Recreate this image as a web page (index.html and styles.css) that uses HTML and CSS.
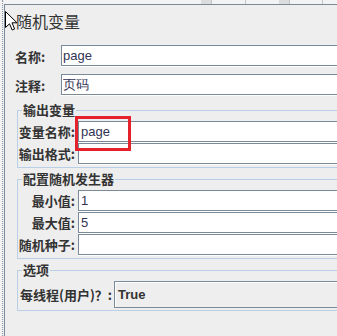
FILE: index.html
```html
<!DOCTYPE html>
<html>
<head>
<meta charset="utf-8">
<link rel="stylesheet" href="styles.css">
</head>
<body>
<div class="frame">
  <div class="gutter"></div>
  <div class="col">
    <div class="topstrip">
      <span class="sp s1"></span><span class="tabbox"></span><span class="tline"></span>
      <span class="sp s2"></span><span class="tline"></span>
      <span class="sp s3"></span><span class="tabbox"></span><span class="tline"></span>
      <span class="sp s4"></span><span class="tline"></span>
    </div>
    <div class="panel">
      <div class="title">随机变量</div>
      <div class="toprow">
        <span class="tlabel">名称:</span>
        <input class="field" type="text" value="page">
      </div>
      <div class="toprow second">
        <span class="tlabel">注释:</span>
        <input class="field" type="text" value="页码">
      </div>

      <fieldset class="group first">
        <legend>输出变量</legend>
        <div class="grid">
          <span class="glabel">变量名称:</span>
          <input class="field" type="text" value="page">
          <span class="glabel">输出格式:</span>
          <input class="field" type="text" value="">
        </div>
      </fieldset>

      <fieldset class="group">
        <legend>配置随机发生器</legend>
        <div class="grid">
          <span class="glabel">最小值:</span>
          <input class="field" type="text" value="1">
          <span class="glabel">最大值:</span>
          <input class="field" type="text" value="5">
          <span class="glabel">随机种子:</span>
          <input class="field" type="text" value="">
        </div>
      </fieldset>

      <fieldset class="group">
        <legend>选项</legend>
        <div class="optrow">
          <span class="olabel">每线程(用户)？:</span>
          <div class="combo">True</div>
        </div>
      </fieldset>
    </div>
  </div>
</div>
<div class="highlight"></div>
<svg class="cursor" width="13" height="21" viewBox="0 0 13 21">
  <path d="M0.5 0.5 L0.5 16.5 L4.5 12.8 L7.2 19 L9.6 18 L7 11.8 L12 11.8 Z" fill="#fff" stroke="#000" stroke-width="1" stroke-linejoin="miter"/>
</svg>
</body>
</html>
```
FILE: styles.css
```css
html, body {
  margin: 0;
  padding: 0;
}
body {
  width: 337px;
  height: 336px;
  overflow: hidden;
  background: #eeeeee;
  position: relative;
  font-family: "Noto Sans CJK SC", "Liberation Sans", sans-serif;
  color: #333333;
}
.frame {
  display: flex;
  height: 336px;
}
.gutter {
  width: 2px;
  flex: none;
  border-right: 1px dotted #8a9bb0;
  margin-right: 1px;
  background: #f2f2f2;
}
.col {
  flex: none;
  width: 420px;
  display: flex;
  flex-direction: column;
}
.topstrip {
  height: 4px;
  background: #f3f3f3;
  display: flex;
  flex: none;
}
.sp { display: block; height: 4px; }
.s1 { width: 197px; }
.s2 { width: 33px; }
.s3 { width: 33px; }
.s4 { width: 32px; }
.tabbox { display: block; width: 10px; height: 4px; background: #dcdcdc; }
.tline { display: block; width: 1px; height: 4px; background: #c4c4c4; }
.panel {
  flex: 1;
  border-top: 1px solid #7a8a99;
  border-left: 1px solid #7a8a99;
  background: #eeeeee;
  display: flex;
  flex-direction: column;
}
.title {
  margin-top: 6px;
  padding-left: 11px;
  font-size: 16px;
  line-height: 20px;
  height: 20px;
}
.toprow {
  display: flex;
  align-items: center;
  margin-top: 14px;
  padding-left: 10px;
  height: 22px;
}
.toprow.second {
  margin-top: 7px;
}
.toprow .field {
  align-self: flex-start;
}
.tlabel {
  width: 46px;
  flex: none;
  font-size: 13px;
  font-weight: bold;
  line-height: 21px;
  height: 21px;
}
.field {
  box-sizing: border-box;
  height: 21px;
  flex: 1;
  min-width: 0;
  width: 100%;
  margin: 0 0 1px 0;
  padding: 0 0 0 1px;
  border: 1px solid #7a8a99;
  border-right: none;
  box-shadow: 0 1px 0 #ffffff;
  background: #ffffff;
  font-family: "Liberation Sans", sans-serif;
  font-size: 13px;
  color: #333355;
  outline: none;
  border-radius: 0;
}
.group {
  margin: 4px 0 0 12px;
  padding: 4px 0 2px 0;
  border: 1px solid #b8cfe5;
  border-right: none;
  min-width: 0;
}
.group.first {
  margin-top: 7px;
}
.group legend {
  margin-left: 4px;
  padding: 0 1px;
  font-size: 13px;
  line-height: 14px;
  height: 14px;
  font-weight: bold;
  color: #333333;
}
.grid {
  display: grid;
  grid-template-columns: 60px 1fr;
  grid-auto-rows: 22px;
}
.glabel {
  text-align: right;
  padding-right: 3px;
  font-size: 13px;
  font-weight: bold;
  line-height: 21px;
  height: 21px;
  white-space: nowrap;
}
.grid .field {
  padding-left: 2px;
}
.optrow {
  display: flex;
  align-items: center;
  height: 27px;
}
.olabel {
  flex: none;
  width: 94px;
  padding-left: 2px;
  font-size: 13px;
  font-weight: bold;
  white-space: nowrap;
}
.combo {
  flex: 1;
  box-sizing: border-box;
  height: 27px;
  border: 1px solid #7a8a99;
  border-right: none;
  box-shadow: inset 1px 1px 0 #ffffff;
  background: #eeeeee;
  padding-left: 3px;
  font-family: "Liberation Sans", sans-serif;
  font-size: 13px;
  font-weight: bold;
  line-height: 25px;
  color: #333333;
}
.highlight {
  position: absolute;
  left: 75px;
  top: 116px;
  width: 50px;
  height: 29px;
  border: 3px solid #e5212b;
}
.cursor {
  position: absolute;
  left: 5px;
  top: 11px;
}
```
